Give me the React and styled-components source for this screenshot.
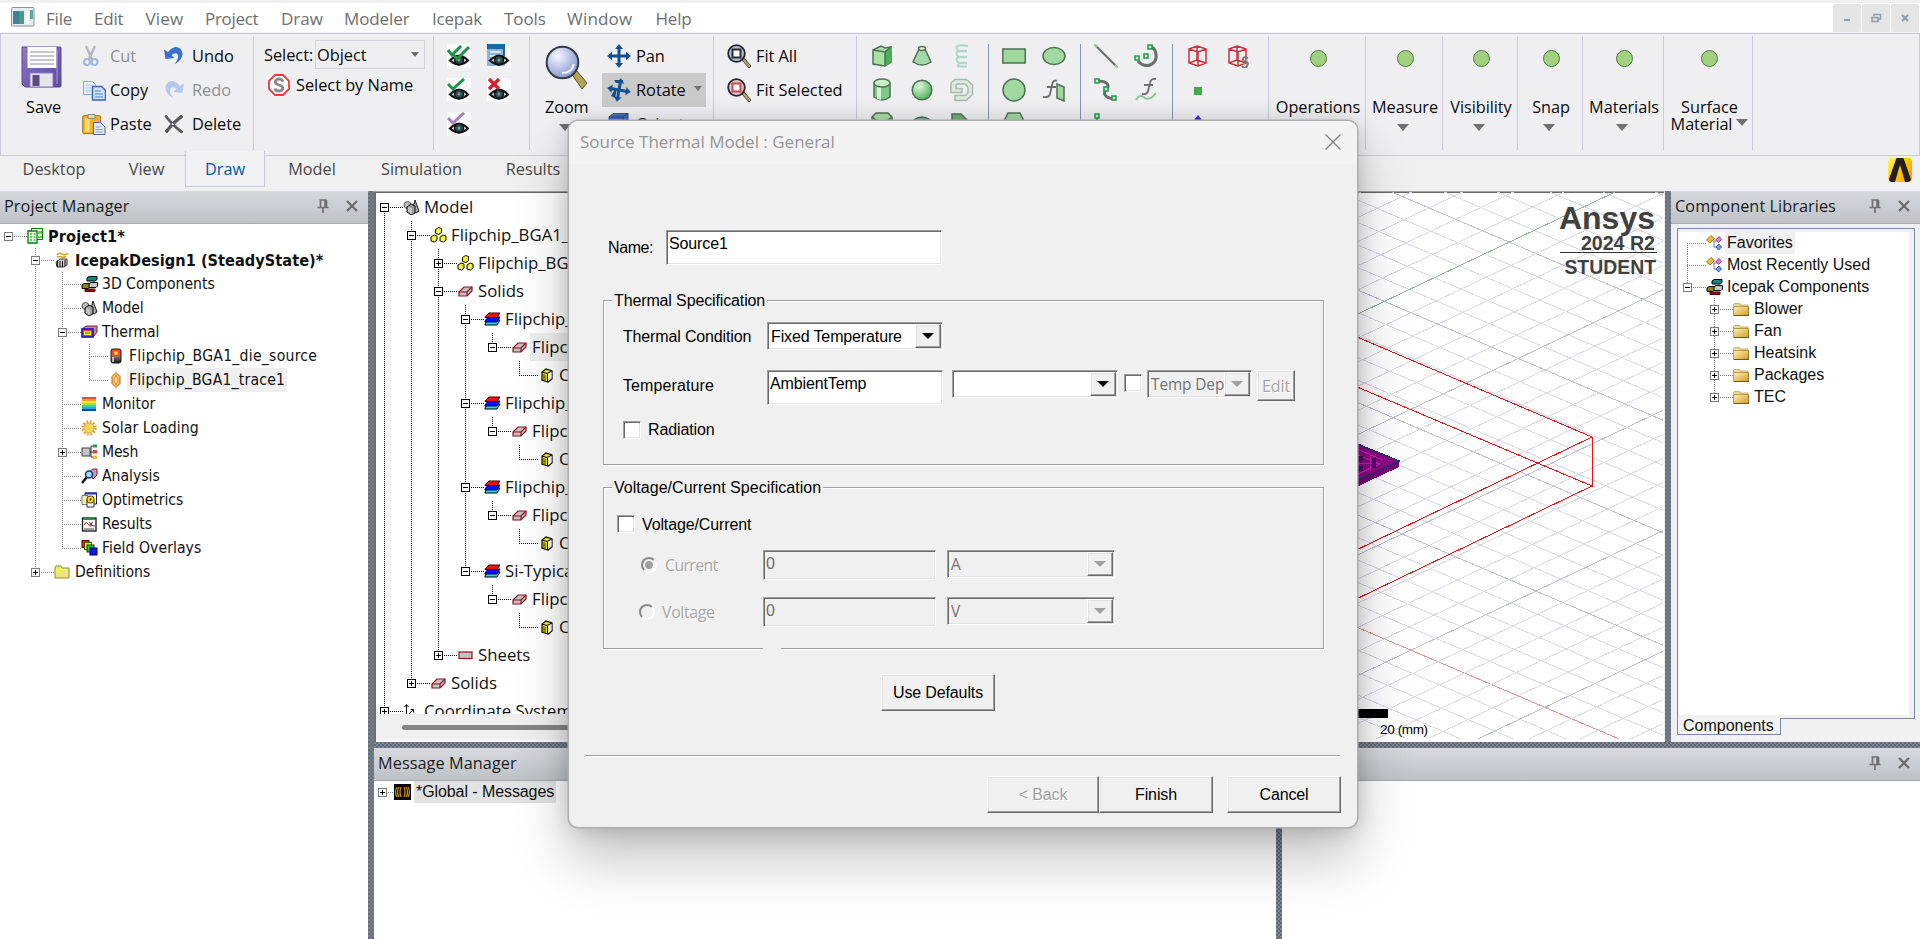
import React from "react";
import styled, { createGlobalStyle, css } from "styled-components";

const UI = '"Open Sans", "Noto Sans", sans-serif';
const ARIAL = '"Liberation Sans", Arial, sans-serif';
const TAHOMA = '"DejaVu Sans Condensed", "Noto Sans", sans-serif';

const GlobalStyle = createGlobalStyle`
  * { box-sizing: border-box; }
  body { margin: 0; overflow: hidden; background: #f0f0f0; }
  svg { display: block; flex: none; }
`;

/* ---------- frame ---------- */
const Window = styled.div`
  position: relative;
  width: 1920px;
  height: 939px;
  overflow: hidden;
  display: flex;
  flex-direction: column;
  background: #f0f0f0;
  font-family: ${UI};
  color: #111;
  white-space: nowrap;
`;
const MenuBar = styled.div`
  height: 31px;
  margin: 3px 0 -1px;
  background: #fff;
  border-bottom: 2px solid #f3f3f3;
  display: flex;
  flex: none;
  align-items: flex-start;
  padding-left: 11px;
`;
const AppIcon = styled.svg`
  margin: 4px 0 0;
`;
const MenuItem = styled.span`
  width: ${(p) => p.$w}px;
  font-size: 17px;
  letter-spacing: ${(p) => p.$ls || 0}px;
  line-height: 31px;
  color: #6e6e6e;
`;
const WindowButtons = styled.div`
  margin-left: auto;
  display: flex;
  gap: 1px;
  padding: 1px 1px 0 0;
`;
const WindowButton = styled.div`
  width: 28px;
  height: 28px;
  border-radius: 2px;
  background: #e5e5e5;
  display: flex;
  align-items: center;
  justify-content: center;
`;

/* ---------- ribbon ---------- */
const Ribbon = styled.div`
  height: 123px;
  flex: none;
  border: 1px solid #c9c9da;
  background: #efeff2;
  display: flex;
  padding-top: 2px;
`;
const Group = styled.div`
  width: ${(p) => p.$w}px;
  height: 114px;
  padding: 3px 0 0 ${(p) => p.$pl || 0}px;
  border-right: 1px solid #c9c9da;
  display: flex;
  flex: none;
  align-items: flex-start;
`;
const Column = styled.div`
  display: flex;
  flex-direction: column;
  width: ${(p) => (p.$w ? p.$w + "px" : "auto")};
`;
const Tool = styled.div`
  display: flex;
  align-items: center;
  height: 34px;
  margin-top: ${(p) => p.$mt || 0}px;
  width: ${(p) => (p.$w ? p.$w + "px" : "auto")};
  padding: 0 0 2px ${(p) => p.$pl || 0}px;
  font-size: 16.4px;
  letter-spacing: -0.05px;
  color: ${(p) => (p.$off ? "#8f8f92" : "#0a0a0a")};
  background: ${(p) => (p.$active ? "#cacacb" : "transparent")};
`;
const ToolIcon = styled.span`
  width: ${(p) => p.$w || 28}px;
  margin-top: 2px;
  flex: none;
`;
const SelectLabel = styled.span`
  width: 51px;
`;
const BigTool = styled.div`
  width: ${(p) => p.$w || "100%"};
  height: 110px;
  padding-left: ${(p) => p.$pl || 0}px;
  display: flex;
  flex-direction: column;
  align-items: ${(p) => p.$a || "center"};
  font-size: 16.3px;
  color: #0a0a0a;
`;
const BigIcon = styled.div`
  height: 56px;
  padding-top: ${(p) => p.$pt || 0}px;
`;
const BigLabel = styled.div`
  line-height: ${(p) => p.$lh || 24}px;
  padding-left: ${(p) => p.$pl || 0}px;
  letter-spacing: ${(p) => p.$ls || 0}px;
  display: flex;
  align-items: center;
`;
const Dot = styled.div`
  width: 17px;
  height: 17px;
  border-radius: 50%;
  background: #a0d080;
  border: 1px solid #4a7a3a;
`;
const Arrow = styled.span`
  width: 0;
  height: 0;
  margin: ${(p) => p.$m || "0"};
  border: ${(p) => p.$s || 6}px solid transparent;
  border-bottom: 0;
  border-top: ${(p) => p.$h || 7}px solid ${(p) => p.$c || "#707070"};
`;
const SelectBox = styled.div`
  width: 110px;
  height: 29px;
  border: 1px solid #d3d3dc;
  display: flex;
  align-items: center;
  justify-content: space-between;
  padding: 0 5px 0 1px;
`;
const IconGrid = styled.div`
  display: grid;
  grid-template-columns: repeat(${(p) => p.$n}, ${(p) => p.$cw || 40}px);
  grid-auto-rows: 34px;
  justify-items: ${(p) => p.$j || "center"};
  align-items: center;
`;
const Divider = styled.div`
  width: 1px;
  height: 106px;
  margin: 5px ${(p) => p.$mr || 5}px 0 ${(p) => p.$ml || 6}px;
  background: #8795b0;
`;
const Tabs = styled.div`
  height: 35px;
  flex: none;
  display: flex;
  align-items: flex-start;
`;
const Tab = styled.div`
  width: ${(p) => p.$w}px;
  height: 31px;
  line-height: 27px;
  text-align: center;
  font-size: 16.3px;
  color: #484848;
  ${(p) =>
    p.$active &&
    css`
      height: 36px;
      margin-top: -5px;
      line-height: 37px;
      color: #0057a8;
      background: #f2f2f4;
      border: 1px solid #c9c9da;
      border-top: 0;
    `}
`;
const Brand = styled.div`
  margin: 2px 8px 0 auto;
`;

/* ---------- work area ---------- */
const splitter = css`
  flex: none;
  background: repeating-conic-gradient(#5a6880 0 25%, #87878a 0 50%) 0 0 / 4px 4px;
`;
const SplitV = styled.div`
  width: 6px;
  ${splitter}
`;
const SplitH = styled.div`
  height: 6px;
  ${splitter}
`;
const Work = styled.div`
  flex: 1;
  min-height: 0;
  display: flex;
`;
const Main = styled.div`
  flex: 1;
  min-width: 0;
  display: flex;
  flex-direction: column;
`;
const TopRow = styled.div`
  height: 551px;
  flex: none;
  display: flex;
`;
const BottomRow = styled.div`
  flex: 1;
  display: flex;
  min-height: 0;
`;
const Panel = styled.div`
  width: ${(p) => (p.$w ? p.$w + "px" : "auto")};
  flex: ${(p) => (p.$w ? "none" : "1")};
  background: ${(p) => p.$bg || "#fff"};
  display: flex;
  flex-direction: column;
  overflow: hidden;
`;
const PanelHead = styled.div`
  height: 33px;
  flex: none;
  background: linear-gradient(#d6dade, #bec1c5);
  border-bottom: 1px solid #a6a8ab;
  display: flex;
  align-items: center;
  padding: 0 10px 2px ${(p) => p.$pl || 4}px;
  gap: 17px;
  font-size: 16.3px;
  letter-spacing: 0.05px;
  color: #1c1c1c;
`;
const HeadTitle = styled.span`
  flex: 1;
`;
const EditorArea = styled.div`
  flex: 1;
  display: flex;
  background: #fff;
  border-top: 1px solid #a0a0a0;
  border-right: 1px solid #f0f0f0;
  box-shadow: inset 0 1px 0 #696969;
`;
const ModelPane = styled.div`
  width: 526px;
  flex: none;
  display: flex;
  flex-direction: column;
  border-left: 2px solid #6e6e6e;
`;
const ModelScroll = styled.div`
  height: 522px;
  overflow: hidden;
  padding-top: 1px;
`;
const ScrollBar = styled.div`
  flex: 1;
  background: #f0f0f0;
  padding: 11px 0 0 26px;
  border-bottom: 2px solid #fafafa;
`;
const Thumb = styled.div`
  height: 5px;
  border-radius: 3px;
  background: #858585;
`;
const LibBox = styled.div`
  margin: 4px 5px 0 6px;
  height: 491px;
  border: 1px solid #7b8ba5;
  padding: 3px 5px 3px 1px;
  display: flex;
`;
const LibTree = styled.div`
  flex: 1;
  background: #fff;
`;
const LibTab = styled.div`
  width: 104px;
  height: 17px;
  margin: -1px 0 0 6px;
  border: 1px solid #7b8ba5;
  border-top: 0;
  background: #f3f3f3;
  font: 16px/16px ${ARIAL};
  padding-left: 5px;
`;

/* ---------- tree ---------- */
const dotV = (c) => `repeating-linear-gradient(${c} 0 1px, transparent 1px 2px)`;
const dotH = (c) => `repeating-linear-gradient(90deg, ${c} 0 1px, transparent 1px 2px)`;
const vSize = { full: ["0", "100%"], up: ["0", "50%"], down: ["100%", "50%"], none: ["0", "0"] };
const Row = styled.div`
  height: ${(p) => p.$h}px;
  display: flex;
  align-items: center;
  font: ${(p) => p.$font};
`;
const Branch = styled.span`
  width: ${(p) => p.$w || 27}px;
  height: 100%;
  flex: none;
  display: flex;
  align-items: center;
  padding-left: 4px;
  background:
    ${(p) => dotV(p.$c)} 8px ${(p) => vSize[p.$v][0]} / 1px ${(p) => vSize[p.$v][1]} no-repeat,
    ${(p) => dotH(p.$c)} 8px 50% / ${(p) => (p.$joint ? "19px 1px" : "0 0")} no-repeat;
`;
const Box = styled.span`
  width: 9px;
  height: 9px;
  border: 1px solid ${(p) => p.$c};
  background:
    linear-gradient(#000, #000) center / 5px 1px no-repeat,
    linear-gradient(#000, #000) center / 1px ${(p) => (p.$plus ? 5 : 0)}px no-repeat,
    #fff;
`;
const TreeIcon = styled.span`
  width: ${(p) => p.$w || 19}px;
  flex: none;
`;
const Label = styled.span`
  padding: 0 2px ${(p) => p.$pb || 0}px;
  height: 100%;
  display: flex;
  align-items: center;
  letter-spacing: ${(p) => p.$ls || 0}px;
  background: ${(p) => (p.$hl ? p.$hl : "transparent")};
  ${(p) => p.$bold && "font-weight: bold; font-size: 16.2px;"}
`;

function Tree({ rows, h, font, line = "#808080", box = "#7a7a7a", icons, iw, bw, pb, hl = "#efefef" }) {
  const hasNext = (i, lv) => {
    for (let j = i + 1; j < rows.length; j++) {
      if (rows[j].l < lv) return false;
      if (rows[j].l === lv) return true;
    }
    return false;
  };
  const hasPrev = (i, lv) => rows.slice(0, i).some((r) => r.l <= lv);
  return rows.map((r, i) => {
    const cells = [];
    for (let lv = 0; lv < r.l; lv++)
      cells.push(<Branch key={lv} $c={line} $v={hasNext(i, lv) ? "full" : "none"} />);
    const up = hasPrev(i, r.l);
    const down = hasNext(i, r.l);
    return (
      <Row key={i} $h={h} $font={font}>
        {cells}
        <Branch $c={line} $w={bw} $joint $v={up && down ? "full" : up ? "up" : down ? "down" : "none"}>
          {r.e && <Box $c={box} $plus={r.e === "+"} />}
        </Branch>
        <TreeIcon $w={iw}>{icons[r.i]}</TreeIcon>
        <Label $ls={r.ls} $bold={r.b} $pb={pb} $hl={r.s && hl}>{r.t}</Label>
      </Row>
    );
  });
}

/* ---------- dialog ---------- */
const Dialog = styled.div`
  position: absolute;
  left: 569px;
  top: 121px;
  width: 788px;
  height: 706px;
  border-radius: 9px;
  background: #f0f0f0;
  box-shadow:
    0 0 0 1.5px #adadad,
    0 2px 22px rgba(0, 0, 0, 0.18),
    0 32px 56px rgba(0, 0, 0, 0.24);
  display: flex;
  flex-direction: column;
  font: 16px ${ARIAL};
  letter-spacing: -0.13px;
  color: #000;
`;
const DialogHead = styled.div`
  height: 43px;
  flex: none;
  border-radius: 9px 9px 0 0;
  background: #f3f3f3;
  display: flex;
  justify-content: space-between;
  align-items: center;
  padding: 0 16px 2px 11px;
  font: 17px ${UI};
  letter-spacing: 0;
  color: #959595;
`;
const Line = styled.div`
  display: flex;
  align-items: ${(p) => p.$a || "flex-start"};
  margin-top: ${(p) => p.$mt}px;
  padding-left: ${(p) => p.$pl || 0}px;
  height: ${(p) => p.$h}px;
`;
const FieldLabel = styled.span`
  width: ${(p) => p.$w}px;
  line-height: ${(p) => p.$lh || 29}px;
  letter-spacing: ${(p) => p.$ls || -0.15}px;
`;
const sunken = css`
  border: 1px solid #a0a0a0;
  border-right-color: #fff;
  border-bottom-color: #fff;
  box-shadow: inset 1px 1px 0 #696969, inset -1px -1px 0 #e3e3e3;
`;
const raised = css`
  background: #f0f0f0;
  border: 1px solid #fff;
  border-right-color: #696969;
  border-bottom-color: #696969;
  box-shadow: inset -1px -1px 0 #a0a0a0, inset 1px 1px 0 #e3e3e3;
`;
const Field = styled.div`
  width: ${(p) => p.$w}px;
  height: ${(p) => p.$h || 35}px;
  padding: 4px 0 0 2px;
  line-height: 18px;
  background: ${(p) => (p.$off ? "#f0f0f0" : "#fff")};
  color: ${(p) => (p.$off ? "#6d6d6d" : "#000")};
  ${sunken}
`;
const Combo = styled.div`
  width: ${(p) => p.$w}px;
  height: 28px;
  margin-left: ${(p) => p.$ml || 0}px;
  padding: 2px 2px 2px 3px;
  display: flex;
  justify-content: space-between;
  align-items: center;
  background: ${(p) => (p.$off ? "#f0f0f0" : "#fff")};
  ${sunken}
  ${(p) => p.$off && css`font: 15.4px ${UI}; color: #737373; letter-spacing: -0.1px;`}
`;
const ComboText = styled.span`
  padding-top: 1px;
`;
const ComboButton = styled.span`
  width: 26px;
  height: 24px;
  flex: none;
  margin: 0 -1px 0 -6px;
  display: flex;
  align-items: center;
  justify-content: center;
  ${raised}
`;
const Check = styled.span`
  width: 18px;
  height: 18px;
  margin: ${(p) => p.$m || "0"};
  background: #fff;
  ${sunken}
`;
const Button = styled.div`
  width: ${(p) => p.$w}px;
  height: ${(p) => p.$h || 37}px;
  margin: ${(p) => p.$m || "0"};
  display: flex;
  align-items: center;
  justify-content: center;
  ${raised}
  ${(p) => p.$off && "color: #a0a0a0; text-shadow: 1px 1px 0 #fff;"}
`;
const GroupBox = styled.div`
  margin: ${(p) => p.$mt}px 0 0 34px;
  width: 721px;
  height: ${(p) => p.$h}px;
  flex: none;
  border: 1px solid #a0a0a0;
  box-shadow: 1px 1px 0 #fff, inset 1px 1px 0 #fff;
  display: flex;
  flex-direction: column;
  align-items: flex-start;
`;
const Legend = styled.div`
  height: 18px;
  margin: -10px 0 0 8px;
  padding: 0 2px;
  line-height: 19px;
  letter-spacing: ${(p) => p.$ls || -0.13}px;
  background: #f0f0f0;
`;
const RadioCell = styled.div`
  width: ${(p) => p.$w || 122}px;
  height: 29px;
  display: flex;
  align-items: center;
`;
const Radio = styled.span`
  width: 16px;
  height: 16px;
  margin-right: ${(p) => p.$mr || 8}px;
  border-radius: 50%;
  border: 2px solid #8a8a8a;
  border-right-color: #fff;
  border-bottom-color: #fff;
  background: ${(p) =>
    p.$on ? "radial-gradient(circle, #a0a0a0 3.6px, #f0f0f0 4.4px)" : "#f0f0f0"};
`;
const Etched = styled.span`
  color: #a6a6a6;
  text-shadow: 1px 1px 0 #fff;
  font: 16px ${UI};
  letter-spacing: ${(p) => p.$ls || -0.5}px;
`;
const BorderGap = styled.div`
  width: 18px;
  height: 3px;
  margin: auto 0 -2px 159px;
  background: #f0f0f0;
`;
const Rule = styled.div`
  height: 2px;
  margin: 44px 17px 0 16px;
  background: #a0a0a0;
  border-bottom: 1px solid #fff;
`;

/* ---------- icons ---------- */
const Svg = ({ w = 16, h = w, vb, children, ...p }) => (
  <svg width={w} height={h} viewBox={vb || `0 0 ${w} ${h}`} fill="none" {...p}>{children}</svg>
);
const Pin = () => (
  <Svg w={12} h={14}>
    <path d="M2.5 1h7M3.5 1v7M8 1v7M9.5 1v7M0.5 8.5h11M6 9v5" stroke="#707070" strokeWidth="1.7" />
  </Svg>
);
const Cross = () => (
  <Svg w={12}>
    <path d="M1 1l10 10M11 1L1 11" stroke="#6a6a6a" strokeWidth="2.2" />
  </Svg>
);
const SaveIcon = () => (
  <Svg w={41} h={42}>
    <defs>
      <linearGradient id="sv" x1="0" y1="0" x2="1" y2="1">
        <stop offset="0" stopColor="#8c78c4" /><stop offset="1" stopColor="#5d48a0" />
      </linearGradient>
    </defs>
    <path d="M1 1h38q1 0 1 1v38q0 1-1 1H4l-3-3z" fill="url(#sv)" stroke="#5b4a94" />
    <rect x="6.5" y="1" width="29" height="21" fill="#fcfcfc" />
    <path d="M9 6h24M9 10h24M9 14h24M9 18h24" stroke="#b4b4bc" strokeWidth="1.4" />
    <rect x="9" y="27" width="23" height="14" fill="#e4e4ea" stroke="#8a7cb8" />
    <rect x="11.5" y="29" width="7" height="11" fill="#5a4b86" />
    <path d="M36 4v34" stroke="#a496d4" />
  </Svg>
);
const CutIcon = () => (
  <Svg w={18} h={22}>
    <path d="M4 1l6 13M13 1L7 14" stroke="#b2b6bc" strokeWidth="2.4" />
    <circle cx="5" cy="17" r="3" stroke="#a3b9de" strokeWidth="2.2" />
    <circle cx="12.5" cy="17" r="3" stroke="#a3b9de" strokeWidth="2.2" />
  </Svg>
);
const CopyIcon = () => (
  <Svg w={24} h={22}>
    <path d="M1.500 2.500h9l3 3v10h-12z" fill="#eaf1fc" stroke="#88a8d8" />
    <path d="M3.500 6h6M3.500 9h6M3.500 12h6" stroke="#9dbbe6" />
    <path d="M10.500 7.500h9l4 4v9.500h-13z" fill="#cfdffa" stroke="#3565b5" strokeWidth="1.4" />
    <path d="M13 12h6M13 15h8M13 18h8" stroke="#5484cf" />
  </Svg>
);
const PasteIcon = () => (
  <Svg w={24} h={22}>
    <rect x="0.700" y="2.700" width="18" height="18" rx="1" fill="#eab02e" stroke="#9d7420" />
    <path d="M3 5h5v14H3z" fill="#f8d670" />
    <path d="M6 1.500h7v4H6z" fill="#dcdcc8" stroke="#8a8a66" />
    <path d="M11.500 9.500h7l4.500 4.500v7.500H11.500z" fill="#dfe9f8" stroke="#56687e" />
    <path d="M13.500 14h5M13.500 16.500h7M13.500 19h7" stroke="#86a0c8" />
  </Svg>
);
const Undo = styled.svg`
  transform: ${(p) => (p.$flip ? "scaleX(-1)" : "none")};
`;
const UndoIcon = ({ c = "#3c6fd0", flip }) => (
  <Undo $flip={flip} width="20" height="20" viewBox="0 0 20 20">
    <path d="M0 3.500l1.500 9.500 9-1-3-3q5-3.500 6.500 0 1 4-4 9.500 9-4.500 8.500-11.500Q17 0.500 11 1 7 2 4 6z" fill={c} />
  </Undo>
);
const DeleteIcon = () => (
  <Svg w={20} h={20}>
    <path d="M2 1q6 8 17 17l-2 1Q8 12 1 3zM17 1Q9 7 1 17l2 2Q9 10 19 3z" fill="#55565a" stroke="#55565a" strokeWidth="0.8" />
  </Svg>
);
const SelectNameIcon = () => (
  <Svg w={22} h={22}>
    <path d="M7 1h8l6 6v8l-6 6H7l-6-6V7z" fill="#fff" stroke="#f0373c" strokeWidth="1.800" />
    <path d="M15 7.500Q14 4.800 11 4.800T7.300 8q0 2 3.700 3t3.700 3q0 3-3.700 3T7 14.500" stroke="#888" strokeWidth="2.800" />
  </Svg>
);
const EyeIcon = ({ kind }) => (
  <Svg w={24} h={24}>
    <rect width="24" height="24" fill="#fafafa" />
    {kind === "list" && (
      <>
        <rect x="0" y="0" width="18" height="22" fill="#8fb2d8" />
        <rect x="0" y="0" width="18" height="5" fill="#1767a8" />
        <path d="M3 8h11M3 12h11M3 16h11" stroke="#d7e5f3" strokeWidth="2" />
        <path d="M17 12V0" stroke="#1767a8" strokeWidth="2" />
      </>
    )}
    <path d="M3 16.500q9-9 18 0-9 8-18 0z" fill="#dfe3e3" stroke="#161616" strokeWidth="2.200" />
    <circle cx="12" cy="16" r="4.500" fill="#2b4a4e" stroke="#111" strokeWidth="1.400" />
    <circle cx="12" cy="16" r="1.500" fill="#79a3a5" />
    {kind === "double" && (
      <path d="M1 6l4 5L14 2M6 10l4 5L22 3" stroke="#1e9448" strokeWidth="3" />
    )}
    {kind === "check" && <path d="M1 6l5 5L17 1" stroke="#1e9448" strokeWidth="3" />}
    {kind === "violet" && <path d="M1 6l5 5L17 1" stroke="#a87fc0" strokeWidth="3" />}
    {kind === "x" && <path d="M2 1l10 10M12 1L2 11" stroke="#d3222c" strokeWidth="3.400" />}
  </Svg>
);
const ZoomIcon = () => (
  <Svg w={44} h={46}>
    <defs>
      <radialGradient id="zm" cx="0.350" cy="0.300" r="0.800">
        <stop offset="0" stopColor="#f4f6ff" /><stop offset="1" stopColor="#7d8fcb" />
      </radialGradient>
    </defs>
    <path d="M26 28l5-3 11 13-5 6z" fill="#b2a452" stroke="#5a5226" />
    <circle cx="17.500" cy="17.500" r="15.800" fill="url(#zm)" stroke="#333a48" strokeWidth="2" />
    <path d="M17 28q10 0 12-9" stroke="#eef1ff" strokeWidth="2" />
  </Svg>
);
const PanIcon = ({ turn }) => (
  <Svg w={24} h={24}>
    <path
      d="M12 0l4 5h-2.500v5.500H19V8l5 4-5 4v-2.500h-5.500V19H16l-4 5-4-5h2.500v-5.500H5V16l-5-4 5-4v2.500h5.500V5H8z"
      fill="#13508f" transform={turn ? "rotate(10 12 12)" : undefined}
    />
    {turn && <path d="M7 2h9v3H9zM4 18l4-7h2l-2 9z" fill="#13508f" />}
  </Svg>
);
const OrientIcon = () => (
  <Svg w={24} h={22}>
    <path d="M2 4l5-4h14v16l-5 5H2z" fill="#4a6fb8" stroke="#23427f" />
    <path d="M2 4h14v17M16 4l5-4" stroke="#23427f" />
  </Svg>
);
const FitIcon = ({ c, f }) => (
  <Svg w={24} h={24}>
    <path d="M15 16l2-2 7 8-2 2z" fill="#b0a670" stroke="#4a4a3c" />
    <circle cx="9.500" cy="9.500" r="8.300" fill={f} stroke="#25252e" strokeWidth="1.800" />
    <rect x="5.500" y="5.500" width="8" height="8" fill="#fff" stroke={c} strokeWidth="2" />
  </Svg>
);
const gs = { stroke: "#4f7057", strokeWidth: 1.5 };
const ShapeBox = () => (
  <Svg w={24}><path d="M3 6l8-4 4 2 6-1v15l-6 4-12-2z" fill="#a9e2a2" {...gs} /><path d="M15 7v15l6-4V3z" fill="#43b35a" /><path d="M3 6l12 2 6-5M15 8v14" {...gs} /></Svg>
);
const ShapeCone = () => (
  <Svg w={24}><path d="M9 5h6l6 13q-9 6-18 0z" fill="#a4d8a8" {...gs} /><ellipse cx="12" cy="4.500" rx="3.500" ry="2" fill="#d6f2d2" {...gs} /></Svg>
);
const ShapeHelix = () => (
  <Svg w={24}><path d="M18 2Q6 0 6.500 4t10.500 3M17 7Q6 6 6.500 10t10.500 3M17 13Q6 12 6.500 16t10.500 3M17 19Q7 18 8 22.500h9" stroke="#a9d9c6" strokeWidth="2" /></Svg>
);
const ShapeCyl = () => (
  <Svg w={24}><path d="M4 5v14q8 6 16 0V5z" fill="#7cc884" {...gs} /><path d="M7 8v13l4 1V8z" fill="#d3f3cf" /><ellipse cx="12" cy="5" rx="8" ry="4" fill="#c9efc2" {...gs} /></Svg>
);
const ShapeBall = () => (
  <Svg w={24}>
    <defs><radialGradient id="bl" cx="0.350" cy="0.300" r="0.750"><stop offset="0" stopColor="#e2f8dc" /><stop offset="1" stopColor="#4fb05a" /></radialGradient></defs>
    <circle cx="12" cy="12" r="9.800" fill="url(#bl)" {...gs} />
  </Svg>
);
const ShapeSpiral = () => (
  <Svg w={24}><path d="M5 22.500h11l6.500-6V7l-6-5.500H5L1 5v9.500h11v-4H6V7l1-1h8l3 3v6l-3 2.500H5z" fill="#dfeadf" stroke="#a9b8ac" strokeWidth="1.500" /></Svg>
);
const ShapePoly = () => (
  <Svg w={24}><path d="M2 5l4-4h12l4 4v14l-4 4H6l-4-4z" fill="#a6dda3" {...gs} /><path d="M2 5l5 4h10l5-4" {...gs} /></Svg>
);
const ShapeTorus = () => (
  <Svg w={24}><ellipse cx="12" cy="13" rx="10" ry="8" fill="#6fb379" {...gs} /><ellipse cx="12" cy="12" rx="4" ry="2" fill="#efeff2" {...gs} /></Svg>
);
const ShapeFold = () => (
  <Svg w={24}><path d="M2 2h9l11 11v9H2z" fill="#6fae78" {...gs} /></Svg>
);
const fl = "#9fd9a0";
const Flat = ({ k }) => (
  <Svg w={24}>
    {k === "rect" && <rect x="0.800" y="5" width="22.400" height="14" fill={fl} {...gs} />}
    {k === "oval" && <ellipse cx="12" cy="12" rx="11" ry="8.500" fill={fl} {...gs} />}
    {k === "circle" && <circle cx="12" cy="12" r="11" fill={fl} {...gs} />}
    {k === "poly" && <path d="M6 1h12l5 10-5 10H6L1 11z" fill={fl} {...gs} />}
    {k === "fx" && (
      <>
        <path d="M15 3q-4-2-5 4L8 16q-1 4-7 3M5 9h9" stroke="#6f6f6f" strokeWidth="1.800" />
        <path d="M15 6l7 3v14l-7-3z" fill={fl} {...gs} />
      </>
    )}
  </Svg>
);
const Node = ({ x, y }) => <rect x={x - 2} y={y - 2} width="4" height="4" fill="#bff0c8" stroke="#1f9a4c" strokeWidth="1.500" />;
const Curve = ({ k }) => (
  <Svg w={24}>
    {k === "line" && <><path d="M1 1l22 22" stroke="#6a6e6a" strokeWidth="2.200" /><path d="M0 0l3 3M21 21l3 3" stroke="#8fd09a" strokeWidth="2" /></>}
    {k === "arc" && <><path d="M4 17q5 6 12 4 7-3 6-10 0-5-4-8" stroke="#6a6e6a" strokeWidth="3" /><Node x={3} y={14} /><Node x={12} y={12} /><Node x={16} y={3} /></>}
    {k === "spline" && <><path d="M3 3q12 0 11 6-5 5-3 8t9 4" stroke="#6a6e6a" strokeWidth="3" /><Node x={3} y={3} /><Node x={12} y={11} /><Node x={20} y={20} /></>}
    {k === "fy" && <><path d="M22 1q-5-1-6 4l-2 8q-1 4-6 3M10 7h9" stroke="#6f6f6f" strokeWidth="1.800" /><path d="M2 22q4-7 9-2 5 3 11-5" stroke="#8cc497" strokeWidth="2" /></>}
    {k === "pt" && <><path d="M3 3v8" stroke="#6a6e6a" strokeWidth="2" /><Node x={3} y={4} /></>}
  </Svg>
);
const RedCube = ({ s }) => (
  <Svg w={24}>
    <path d="M3 5l8-3 9 3v14l-8 3-9-3zM3 5l9 3 8-3M12 8v14M11 2v14l-8 3M11 16l9 3" stroke="#d0323c" strokeWidth="1.500" />
    {s && <path d="M22 14q-5-2-5 1t3 3 1 4-5 0" stroke="#777" strokeWidth="2" />}
  </Svg>
);
const Square = () => <Svg w={24}><rect x="8" y="9" width="8" height="8" fill="#43aa4c" /></Svg>;
const BlueTip = () => <Svg w={24}><path d="M12 3l4 5h-3v14h-2V8H8z" fill="#2f34f0" /></Svg>;
const AnsysMark = () => (
  <Svg w={24} h={24}>
    <defs><linearGradient id="an" x1="0" y1="0" x2="1" y2="0.600"><stop offset="0" stopColor="#fff27a" /><stop offset="0.500" stopColor="#ffd400" /><stop offset="1" stopColor="#ffa408" /></linearGradient></defs>
    <rect width="24" height="24" rx="4" fill="url(#an)" />
    <path d="M8.500 0h7L23 21.500q-1 2-3 2.500h-3L12 7 7 24H3q-2-1-2-3z" fill="#242021" />
  </Svg>
);

const k1 = { stroke: "#000", strokeWidth: 1 };
const BricksIcon = (
  <Svg w={17} h={16}>
    <path d="M6 2l2-1.500h8v3L14 5H6z" fill="#0b8a84" {...k1} />
    <path d="M1 9l2-1.500h6V11l-2 1.500H1z" fill="#8a8418" {...k1} />
    <path d="M8 8l2-1.500h6.500V10L15 11.500H8z" fill="#c8c8c8" {...k1} />
    <path d="M4 13h10v2.500H4z" fill="#8e0d12" stroke="#5a0000" />
  </Svg>
);
const ModelIcon = (
  <Svg w={17} h={16}>
    <circle cx="4.500" cy="6" r="3.500" fill="#bdbdbd" stroke="#555" />
    <path d="M12 1l4 11-3 2-4-2z" fill="#a5a5a5" stroke="#222" />
    <path d="M4 8l4-3 4 2v7l-4 2-4-3z" fill="#9a9a9a" stroke="#111" />
    <path d="M8 9v6M6 8v5" stroke="#eee" />
  </Svg>
);
const PrjIcon = (
  <Svg w={17} h={16}>
    <path d="M4.500 0.500h11v11h-11z" fill="#fff" stroke="#087a08" />
    <path d="M1 3h9v12H1z" fill="#eaffea" stroke="#087a08" strokeWidth="1.300" />
    <path d="M3 6h2M3 9h2M3 12h2M6.500 6h2M6.500 9h2M6.500 12h2M12 3v3M14 3v3M12 8v2M14 8v2" stroke="#1cd01c" strokeWidth="1.600" />
  </Svg>
);
const DesignIcon = (
  <Svg w={16} h={16}>
    <path d="M3 3q2-3 5-1t6-1M3 5q3-1 5 0t4-1" stroke="#d69a1e" strokeWidth="1.400" />
    <path d="M2 10l4-3h7v6l-3 2H3z" fill="#cfcfcf" stroke="#333" />
    <path d="M3.500 9v6M6 9v6M8.500 9v6M11 8v6" stroke="#111" />
  </Svg>
);
const ThermalIcon = (
  <Svg w={17} h={14}>
    <path d="M1 4l4-3h11v6l-4 5z" fill="#b98a9c" stroke="#8b1a2c" />
    <rect x="1" y="4" width="11" height="8" fill="#f04020" stroke="#1212e8" strokeWidth="1.600" />
    <rect x="3.500" y="6.500" width="6" height="3" fill="#57d62e" stroke="#f5e62a" />
  </Svg>
);
const DieIcon = (
  <Svg w={17} h={16}>
    <defs><linearGradient id="di" x1="0" y1="0" x2="0" y2="1"><stop offset="0.450" stopColor="#f24a1c" /><stop offset="0.550" stopColor="#777" /><stop offset="1" stopColor="#111" /></linearGradient></defs>
    <rect x="3" y="1" width="10" height="14" rx="2" fill="url(#di)" stroke="#2a1212" />
    <circle cx="8" cy="5" r="2" fill="#ffd86a" />
    <path d="M5 9v5" stroke="#ddd" strokeWidth="1.500" />
  </Svg>
);
const TraceIcon = (
  <Svg w={17} h={16}><path d="M8 0.500l4 4v7l-4 4-4-4v-7z" fill="#ffc05a" stroke="#a5691a" /><path d="M8 3l2 5-2 5-2-5z" fill="#ffe7bb" stroke="#e09030" /></Svg>
);
const MonitorIcon = (
  <Svg w={17} h={14}>
    {["#f04a28", "#f8a01c", "#f6e628", "#a2e04a", "#2cd6b0", "#28a8f0", "#1a3ca8"].map((c, i) => (
      <rect key={c} x="1" y={i * 2} width="14" height="2" fill={c} />
    ))}
  </Svg>
);
const SunIcon = (
  <Svg w={16} h={16}><circle cx="8" cy="8" r="6.500" stroke="#d9a32a" strokeWidth="2.400" strokeDasharray="1.700 1.700" /><circle cx="8" cy="8" r="5" fill="#f9d560" stroke="#e0a62c" /></Svg>
);
const MeshIcon = (
  <Svg w={17} h={16}>
    <path d="M8 8h5M10 8V2h3M10 8v5h3" stroke="#333" />
    <rect x="1" y="4" width="8" height="8" fill="#c6c6c6" stroke="#444" />
    <rect x="12" y="0.500" width="4" height="3" fill="#28a044" /><rect x="12" y="6" width="4" height="3.500" fill="#e04444" /><rect x="12" y="11.500" width="4" height="3.500" fill="#f2b826" />
  </Svg>
);
const AnalysisIcon = (
  <Svg w={17} h={16}>
    <path d="M8 4l4-3h4v6l-4 4z" fill="#c4a0aa" stroke="#8b1a2c" />
    <circle cx="8" cy="6.500" r="3.500" fill="#a8dcea" stroke="#173a80" strokeWidth="1.600" />
    <path d="M5.500 9.500L1 15" stroke="#111" strokeWidth="2.400" />
  </Svg>
);
const OptiIcon = (
  <Svg w={17} h={16}>
    <path d="M4 1h11.500v11H4z" fill="#fff" stroke="#222" /><path d="M4 1.500h12" stroke="#1a2ccc" strokeWidth="2" />
    <path d="M1 3.500h6v9H1z" fill="#f5f1b0" stroke="#777" /><path d="M6 8h7v7H6z" fill="#fff" stroke="#333" />
    <circle cx="9.500" cy="7.500" r="3.500" fill="#ffe01a" stroke="#5a4a00" strokeWidth="1.200" /><circle cx="9.500" cy="7.500" r="1" fill="#000" />
  </Svg>
);
const ResultsIcon = (
  <Svg w={17} h={15}>
    <rect x="1.500" y="1" width="13.500" height="13" fill="#fff" stroke="#111" strokeWidth="1.300" /><path d="M2 2h12" stroke="#2f8f3c" strokeWidth="2" />
    <path d="M3 8q2-4 4-1t3 2 4 0" stroke="#e01818" /><path d="M8 5l4 4M12 5L8 9M3 12h10" stroke="#444" />
  </Svg>
);
const OverlayIcon = (
  <Svg w={17} h={16}>
    <rect x="1" y="0.500" width="7" height="7" fill="#ee1c1c" stroke="#500" /><rect x="3.500" y="2.500" width="7" height="7" fill="#f7e81e" stroke="#550" />
    <rect x="6" y="5" width="7" height="7" fill="#16c83a" stroke="#040" /><rect x="9" y="8" width="7" height="7" fill="#1414e6" stroke="#006" />
  </Svg>
);
const FolderDots = (
  <Svg w={16} h={14}><path d="M1 3l1-2h5l1 2h7v10H1z" fill="#efe77a" stroke="#8f8a3a" /><path d="M2 4.500h12" stroke="#fff" strokeDasharray="1 1" /></Svg>
);
const BallsIcon = (
  <Svg w={17} h={16}>
    {[[8.5, 4], [4, 11.5], [13, 11.5]].map(([x, y]) => (
      <g key={x}>
        <path d={`M${x - 3} ${y - 1.500}l3-2 3 1v4l-2.500 2-3.500-1z`} fill="#f4ec1e" stroke="#111" />
        <path d={`M${x} ${y - 1}v3.500`} stroke="#fff" />
      </g>
    ))}
  </Svg>
);
const SolidIcon = (
  <Svg w={17} h={12}><path d="M2 7l5-5h8v4l-5 5H2z" fill="#c8c0c0" stroke="#8a1420" strokeWidth="1.200" /><path d="M2 7h8l5-5M10 7v4" stroke="#8a1420" strokeWidth="1.200" /></Svg>
);
const LayerIcon = (
  <Svg w={17} h={14}>
    <path d="M1 12l3-4h12l-3 5H1z" fill="#18e0f0" stroke="#000" /><path d="M1 9l3-4h12l-3 5H1z" fill="#1010e8" stroke="#00005a" />
    <path d="M1 5l4-4h11l-3 4.500H1z" fill="#f01010" stroke="#400" />
  </Svg>
);
const CreateIcon = (
  <Svg w={18} h={15}><path d="M4 4l4-3 6 2v8l-4 3-6-2z" fill="#f4ec1e" stroke="#000" strokeWidth="1.200" /><path d="M9.500 6l4-2.500v7l-4 3z" fill="#fff" /><path d="M4 4l5 1.500 5-2.500M9.500 6v8" stroke="#000" /><path d="M5 6v6l3 1V7z" fill="#8f8a10" /></Svg>
);
const SheetIcon = (
  <Svg w={17} h={10}><rect x="2" y="2" width="13" height="6.500" fill="#c8c0c0" stroke="#8a1420" strokeWidth="1.200" /></Svg>
);
const CsIcon = (
  <Svg w={17} h={16}><path d="M3.500 15V2M1.500 4l2-2.500 2 2.500M3.500 14l7-8M7.500 6.500h3v3M4 14.500h9" stroke="#111" /></Svg>
);
const LinkIcon = (
  <Svg w={17} h={16}>
    <path d="M7 6h4M8 6v6h3" stroke="#6a7a9c" /><path d="M0.500 5L5 0.500l3.500 3L4 8z" fill="#f0b93a" stroke="#a87a18" />
    <path d="M10 4.500l3-3 2.500 3-3 3z" fill="#e47ad8" stroke="#a03c96" /><path d="M10 12l3-3 2.500 3-3 3z" fill="#6aa4f0" stroke="#2858a8" />
  </Svg>
);
const FolderIcon = (
  <Svg w={16} h={13}>
    <defs><linearGradient id="fo" x1="0" y1="0" x2="1" y2="1"><stop offset="0" stopColor="#fdf3b8" /><stop offset="1" stopColor="#d69a1e" /></linearGradient></defs>
    <path d="M0.500 1.500l1-1h5l1 1.500H15v2H0.500z" fill="#e9dba0" stroke="#b8a05a" strokeWidth="0.800" /><path d="M0.500 3.500h15v9H0.500z" fill="url(#fo)" stroke="#b58a2c" strokeWidth="0.800" /><path d="M1 12.500h15V4" stroke="#5a4412" strokeWidth="0.800" />
  </Svg>
);
const MessageIcon = (
  <Svg w={17} h={16}><rect width="17" height="16" fill="#000" />
    <path d="M7 3q-2 5 0 10M5 3q-3 5 0 10M3 3q-3 5 0 10M10 3q2 5 0 10M12 3q3 5 0 10M14 3q3 5 0 10" stroke="#c78b1c" strokeWidth="1.300" />
  </Svg>
);
const icons = {
  bricks: BricksIcon, model: ModelIcon, prj: PrjIcon, design: DesignIcon, thermal: ThermalIcon, die: DieIcon,
  trace: TraceIcon, monitor: MonitorIcon, sun: SunIcon, mesh: MeshIcon, analysis: AnalysisIcon, opti: OptiIcon,
  results: ResultsIcon, overlay: OverlayIcon, defs: FolderDots, balls: BallsIcon, solid: SolidIcon, layer: LayerIcon,
  create: CreateIcon, sheet: SheetIcon, cs: CsIcon, link: LinkIcon, folder: FolderIcon, msg: MessageIcon,
};

/* ---------- data ---------- */
const menus = [
  ["File", 48, -0.2], ["Edit", 51.5, -0.2], ["View", 59.5, 0.2], ["Project", 76, -0.3], ["Draw", 63, 0], ["Modeler", 88, -0.1],
  ["Icepak", 72, -0.2], ["Tools", 63, -0.1], ["Window", 88.5, 0.2], ["Help", 60, -0.2],
];
const projectRows = [
  { l: 0, e: "-", i: "prj", t: "Project1*", b: 1, ls: 0.1 },
  { l: 1, e: "-", i: "design", t: "IcepakDesign1 (SteadyState)*", b: 1, ls: 0.03 },
  { l: 2, i: "bricks", t: "3D Components", ls: -0.02 },
  { l: 2, i: "model", t: "Model", ls: -0.1 },
  { l: 2, e: "-", i: "thermal", t: "Thermal", ls: -0.05 },
  { l: 3, i: "die", t: "Flipchip_BGA1_die_source", ls: 0.26 },
  { l: 3, i: "trace", t: "Flipchip_BGA1_trace1", s: 1, ls: 0.2 },
  { l: 2, i: "monitor", t: "Monitor" },
  { l: 2, i: "sun", t: "Solar Loading", ls: 0.1 },
  { l: 2, e: "+", i: "mesh", t: "Mesh", ls: -0.2 },
  { l: 2, i: "analysis", t: "Analysis", ls: 0 },
  { l: 2, i: "opti", t: "Optimetrics", ls: -0.05 },
  { l: 2, i: "results", t: "Results", ls: -0.1 },
  { l: 2, i: "overlay", t: "Field Overlays", ls: 0.05 },
  { l: 1, e: "+", i: "defs", t: "Definitions", ls: 0 },
];
const part = (name) => [
  { l: 3, e: "-", i: "layer", t: name },
  { l: 4, e: "-", i: "solid", t: "Flipchip_BGA1", s: 0 },
  { l: 5, i: "create", t: "CreateBox" },
];
const modelRows = [
  { l: 0, e: "-", i: "model", t: "Model" },
  { l: 1, e: "-", i: "balls", t: "Flipchip_BGA1_Group" },
  { l: 2, e: "+", i: "balls", t: "Flipchip_BGA1" },
  { l: 2, e: "-", i: "solid", t: "Solids" },
  ...part("Flipchip_BGA1"), ...part("Flipchip_BGA1"), ...part("Flipchip_BGA1"), ...part("Si-Typical"),
  { l: 2, e: "+", i: "sheet", t: "Sheets" },
  { l: 1, e: "+", i: "solid", t: "Solids" },
  { l: 0, e: "+", i: "cs", t: "Coordinate Systems" },
].map((r, i) => (i === 5 ? { ...r, s: 1 } : r));
const libRows = [
  { l: 0, i: "link", t: "Favorites", s: 1 },
  { l: 0, i: "link", t: "Most Recently Used" },
  { l: 0, e: "-", i: "bricks", t: "Icepak Components" },
  ...["Blower", "Fan", "Heatsink", "Packages", "TEC"].map((t) => ({ l: 1, e: "+", i: "folder", t })),
];
const bigGroups = [["Operations", 97], ["Measure", 77], ["Visibility", 75], ["Snap", 65], ["Materials", 81]];

/* ---------- 3D view ---------- */
function View3D() {
  const lines = [];
  const x0 = 1340, x1 = 1664, base = 1357.7;
  for (let k = -8; k < 26; k++) {
    const y = (x) => 177.5 + 22.5 * k + 0.4265 * (x - base);
    const c = k === 20 ? "#e09494" : k % 5 === 0 ? "#bebeda" : "#dad9ea";
    lines.push({ key: "a" + k, c, a: y(x0), b: y(x1) });
  }
  for (let k = -5; k < 26; k++) {
    const y = (x) => 314 + 24.1 * k - 0.474 * (x - base);
    const c = k === 0 ? "#93bb93" : k % 5 === 0 ? "#bebeda" : "#dad9ea";
    lines.push({ key: "b" + k, c, a: y(x0), b: y(x1) });
  }
  lines.sort((p, q) => (p.c < q.c ? 1 : -1));
  return (
    <svg width="763" height="547" viewBox="900 192 763 547" shapeRendering="crispEdges">
      {lines.map((l) => <line key={l.key} x1={x0} x2={x1} y1={l.a} y2={l.b} stroke={l.c} />)}
      <path d="M1350 334L1592 437V486L1350 384M1592 437L1350 553M1592 486L1350 602" fill="none" stroke="#f01010" />
      <path d="M1357 444L1399 461V467L1350 490z" fill="#7a0078" />
      <path d="M1350 441L1399 461L1350 484z" fill="#8a0c80" stroke="#2a2c74" strokeWidth="1.5" />
      <path d="M1350 452l30 12-26 12M1357 449l26 11M1358 463h22M1370 455v16M1358 474l18-9" stroke="#d312c0" fill="none" />
      <path d="M1357 456h6v5h-6zM1357 466h6v5h-6zM1372 458h4v10h-4z" fill="#461064" />
      <rect x="1300" y="709" width="88" height="9" fill="#000" />
      <g fontFamily={ARIAL} fill="#404040" fontWeight="bold" textAnchor="end" shapeRendering="auto">
        <text x="1655" y="229" fontSize="32">Ansys</text>
        <text x="1655" y="250" fontSize="19.6">2024 R2</text>
        <text x="1656" y="274" fontSize="19.4">STUDENT</text>
      </g>
      <path d="M1560 252.5h97" stroke="#333" />
      <text x="1380" y="734" fontFamily={ARIAL} fontSize="13.5" textLength="48" fill="#000">20 (mm)</text>
    </svg>
  );
}

const Head = ({ title, pl }) => (
  <PanelHead $pl={pl}><HeadTitle>{title}</HeadTitle><Pin /><Cross /></PanelHead>
);
const DropBtn = ({ off }) => (
  <ComboButton><Arrow $s={6} $h={6} $c={off ? "#a0a0a0" : "#000"} /></ComboButton>
);

function SourceDialog() {
  return (
    <Dialog>
      <DialogHead>
        Source Thermal Model : General
        <Svg w={16}><path d="M0.500 0.500l15 15M15.500 0.500l-15 15" stroke="#808080" strokeWidth="1.300" /></Svg>
      </DialogHead>
      <Line $mt={66} $pl={39} $h={34}>
        <FieldLabel $w={58} $lh={35} $ls={-0.4}>Name:</FieldLabel>
        <Field $w={276}>Source1</Field>
      </Line>
      <GroupBox $mt={36} $h={165}>
        <Legend>Thermal Specification</Legend>
        <Line $mt={13} $pl={19} $h={27}>
          <FieldLabel $w={144}>Thermal Condition</FieldLabel>
          <Combo $w={176}><ComboText>Fixed Temperature</ComboText><DropBtn /></Combo>
        </Line>
        <Line $mt={21} $pl={19} $h={34}>
          <FieldLabel $w={144} $lh={31} $ls={0.1}>Temperature</FieldLabel>
          <Field $w={176}>AmbientTemp</Field>
          <Combo $w={166} $ml={9}><span /><DropBtn /></Combo>
          <Check $m="4px 0 0 6px" />
          <Combo $w={105} $ml={5} $off>Temp Dep<DropBtn off /></Combo>
          <Button $w={38} $h={31} $m="0 0 0 5px" $off><Etched $ls={-0.1}>Edit</Etched></Button>
        </Line>
        <Line $mt={16} $pl={19} $h={19} $a="center"><Check $m="0 7px 0 0" /><ComboText>Radiation</ComboText></Line>
      </GroupBox>
      <GroupBox $mt={22} $h={162}>
        <Legend $ls={0.03}>Voltage/Current Specification</Legend>
        <Line $mt={19} $pl={13} $h={18} $a="center"><Check $m="0 7px 0 0" /><ComboText>Voltage/Current</ComboText></Line>
        <Line $mt={17} $pl={37} $h={30}>
          <RadioCell><Radio $on /><Etched $ls={-0.7}>Current</Etched></RadioCell>
          <Field $w={173} $h={30} $off>0</Field>
          <Combo $w={168} $ml={11} $off>A<DropBtn off /></Combo>
        </Line>
        <Line $mt={17} $pl={35} $h={30}>
          <RadioCell $w={124}><Radio $mr={7} /><Etched $ls={-0.4}>Voltage</Etched></RadioCell>
          <Field $w={173} $h={30} $off>0</Field>
          <Combo $w={168} $ml={11} $off>V<DropBtn off /></Combo>
        </Line>
        <BorderGap />
      </GroupBox>
      <Button $w={114} $m="25px 0 0 312px">Use Defaults</Button>
      <Rule />
      <Line $mt={19} $pl={418} $h={37}>
        <Button $w={112} $off>&lt; Back</Button>
        <Button $w={114}>Finish</Button>
        <Button $w={114} $m="0 0 0 14px">Cancel</Button>
      </Line>
    </Dialog>
  );
}

export default function App() {
  return (
    <Window>
      <GlobalStyle />
      <MenuBar>
        <AppIcon width="24" height="20" viewBox="0 0 24 20">
          <rect x="0.500" y="0.500" width="22.500" height="18.500" rx="1" fill="#e9eced" stroke="#8b9196" />
          <rect x="2" y="4" width="11" height="13" fill="#4c9a8a" /><rect x="2" y="4" width="6" height="13" fill="#3f78a0" opacity="0.700" />
          <path d="M15 4h3v13h-3z" fill="#fff" /><path d="M19 3h3v9h-3z" fill="#5aa99c" />
        </AppIcon>
        <MenuItem $w={11} />
        {menus.map(([t, w, ls]) => <MenuItem key={t} $w={w} $ls={ls}>{t}</MenuItem>)}
        <WindowButtons>
          <WindowButton><Svg w={12}><rect x="3" y="7" width="6" height="2" fill="#8d9bab" /></Svg></WindowButton>
          <WindowButton><Svg w={12}><path d="M4 4V2.500h6.500V7H8M2 5.500h6v4H2z" stroke="#8d9bab" strokeWidth="1.500" /></Svg></WindowButton>
          <WindowButton><Svg w={12}><path d="M3 3l6 6M9 3L3 9" stroke="#8d9bab" strokeWidth="2.200" /></Svg></WindowButton>
        </WindowButtons>
      </MenuBar>

      <Ribbon>
        <Group $w={253}>
          <BigTool $w="81px" $pl={20} $a="flex-start">
            <BigIcon $pt={7}><SaveIcon /></BigIcon>
            <BigLabel $pl={5}>Save</BigLabel>
          </BigTool>
          <Column $w={80}>
            <Tool $off><ToolIcon><CutIcon /></ToolIcon>Cut</Tool>
            <Tool><ToolIcon><CopyIcon /></ToolIcon>Copy</Tool>
            <Tool><ToolIcon><PasteIcon /></ToolIcon>Paste</Tool>
          </Column>
          <Column>
            <Tool $pl={2}><ToolIcon>{<UndoIcon />}</ToolIcon>Undo</Tool>
            <Tool $pl={2} $off><ToolIcon><UndoIcon c="#b3c8ee" flip /></ToolIcon>Redo</Tool>
            <Tool $pl={2}><ToolIcon><DeleteIcon /></ToolIcon>Delete</Tool>
          </Column>
        </Group>
        <Group $w={180} $pl={10}>
          <Column>
            <Tool $w={162} $mt={-1}>
              <SelectLabel>Select:</SelectLabel>
              <SelectBox>Object<Arrow $s={4} $h={5} /></SelectBox>
            </Tool>
            <Tool $pl={4} $mt={-4}><ToolIcon $w={28}><SelectNameIcon /></ToolIcon>Select by Name</Tool>
          </Column>
        </Group>
        <Group $w={96} $pl={13}>
          <IconGrid $n={2} $j="start">
            <EyeIcon kind="double" /><EyeIcon kind="list" />
            <EyeIcon kind="check" /><EyeIcon kind="x" />
            <EyeIcon kind="violet" />
          </IconGrid>
        </Group>
        <Group $w={184} $pl={13}>
          <BigTool $w="59px" $pl={2} $a="flex-start">
            <BigIcon $pt={6}><ZoomIcon /></BigIcon>
            <BigLabel $ls={-0.1}>Zoom</BigLabel>
            <Arrow $m="5px 0 0 14px" />
          </BigTool>
          <Column $w={104}>
            <Tool $pl={5}><ToolIcon $w={29}><PanIcon /></ToolIcon>Pan</Tool>
            <Tool $pl={5} $active><ToolIcon $w={29}><PanIcon turn /></ToolIcon>Rotate<Arrow $s={4} $h={5} $m="0 0 2px 8px" /></Tool>
            <Tool $pl={5}><ToolIcon $w={29}><OrientIcon /></ToolIcon>Orient<Arrow $s={4} $h={5} $m="0 0 2px 9px" /></Tool>
          </Column>
        </Group>
        <Group $w={143} $pl={13}>
          <Column>
            <Tool><ToolIcon $w={29}><FitIcon c="#2c2c34" f="#b9bdd6" /></ToolIcon>Fit All</Tool>
            <Tool><ToolIcon $w={29}><FitIcon c="#c2484c" f="#e9c3cb" /></ToolIcon>Fit Selected</Tool>
          </Column>
        </Group>
        <Group $w={412} $pl={5}>
          <IconGrid $n={3}>
            <ShapeBox /><ShapeCone /><ShapeHelix />
            <ShapeCyl /><ShapeBall /><ShapeSpiral />
            <ShapePoly /><ShapeTorus /><ShapeFold />
          </IconGrid>
          <Divider />
          <IconGrid $n={2}>
            <Flat k="rect" /><Flat k="oval" /><Flat k="circle" /><Flat k="fx" /><Flat k="poly" />
          </IconGrid>
          <Divider />
          <IconGrid $n={2}>
            <Curve k="line" /><Curve k="arc" /><Curve k="spline" /><Curve k="fy" /><Curve k="pt" />
          </IconGrid>
          <Divider />
          <IconGrid $n={2}>
            <RedCube /><RedCube s /><Square /><span /><BlueTip />
          </IconGrid>
        </Group>
        {bigGroups.map(([t, w]) => (
          <Group key={t} $w={w}>
            <BigTool $pl={2}>
              <BigIcon $pt={11}><Dot /></BigIcon>
              <BigLabel $ls={-0.05}>{t}</BigLabel>
              <Arrow $m="5px 4px 0 0" />
            </BigTool>
          </Group>
        ))}
        <Group $w={89}>
          <BigTool $pl={3}>
            <BigIcon $pt={11}><Dot /></BigIcon>
            <BigLabel>Surface</BigLabel>
            <BigLabel $lh={10} $ls={-0.1}>Material<Arrow $m="-3px 0 0 4px" /></BigLabel>
          </BigTool>
        </Group>
      </Ribbon>

      <Tabs>
        <Tab $w={108}>Desktop</Tab>
        <Tab $w={77}>View</Tab>
        <Tab $w={80} $active>Draw</Tab>
        <Tab $w={94}>Model</Tab>
        <Tab $w={125}>Simulation</Tab>
        <Tab $w={98}>Results</Tab>
        <Brand><AnsysMark /></Brand>
      </Tabs>

      <Work>
        <Panel $w={368}>
          <Head title="Project Manager" />
          <Tree rows={projectRows} h={24} font={`15.6px ${TAHOMA}`} icons={icons} />
        </Panel>
        <SplitV />
        <Main>
          <TopRow>
            <EditorArea>
              <ModelPane>
                <ModelScroll>
                  <Tree rows={modelRows} h={28} font={`16.8px ${UI}`} icons={icons} pb={2} line="#000" box="#000" />
                </ModelScroll>
                <ScrollBar><Thumb /></ScrollBar>
              </ModelPane>
              <View3D />
            </EditorArea>
            <SplitV />
            <Panel $w={249} $bg="#f0f0f0">
              <Head title="Component Libraries" />
              <LibBox>
                <LibTree>
                  <Tree rows={libRows} h={22} font={`16px ${ARIAL}`} icons={icons} iw={19} />
                </LibTree>
              </LibBox>
              <LibTab>Components</LibTab>
            </Panel>
          </TopRow>
          <SplitH />
          <BottomRow>
            <Panel $w={902}>
              <Head title="Message Manager" />
              <Tree rows={[{ l: 0, e: "+", i: "msg", t: "*Global - Messages", s: 1, ls: -0.08 }]} h={22} font={`16px ${ARIAL}`} icons={icons} iw={20} bw={20} hl="#e2e2e2" />
            </Panel>
            <SplitV />
            <Panel>
              <Head title="" />
            </Panel>
          </BottomRow>
        </Main>
      </Work>

      <SourceDialog />
    </Window>
  );
}
